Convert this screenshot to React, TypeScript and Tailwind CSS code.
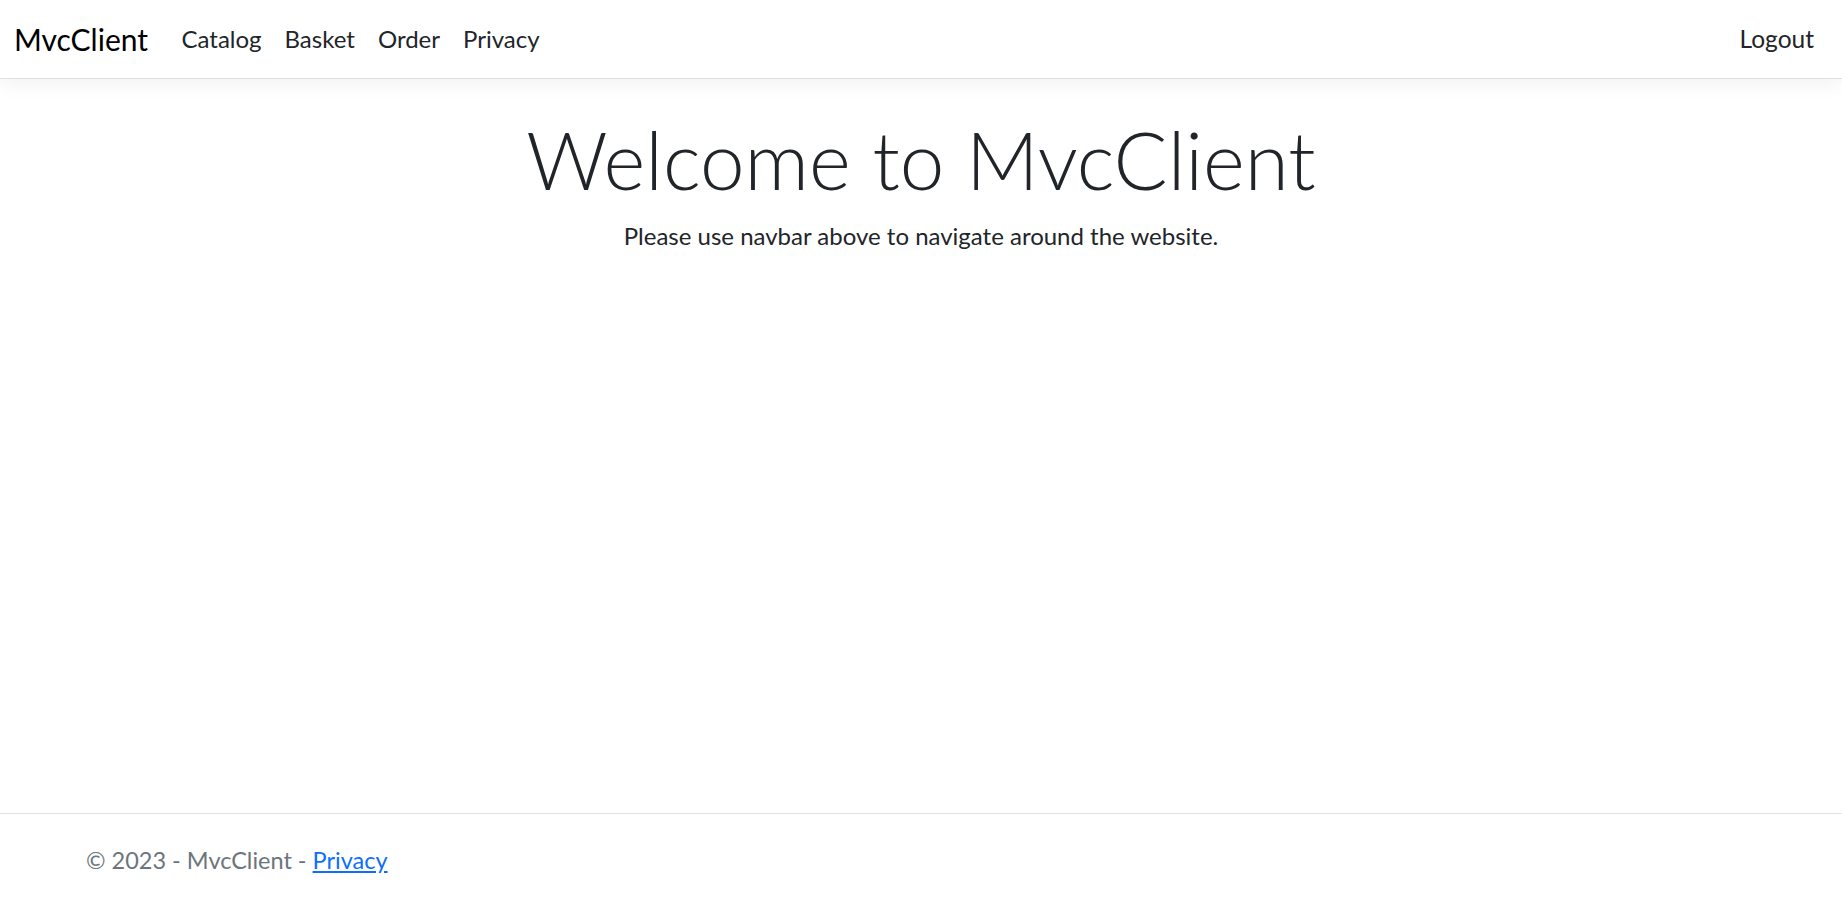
export default function App() {
  const links = ["Catalog", "Basket", "Order", "Privacy"];

  return (
    <div className="min-h-[898px] flex flex-col bg-white text-[#212529] font-['Lato','Open_Sans',sans-serif]">
      {/* NAVBAR */}
      <header>
        <nav className="h-[79px] flex items-center justify-between px-[14px] bg-white border-b border-[#dfdfdf] shadow-[0_6px_18px_rgba(0,0,0,0.05)]">
          <div className="flex items-center">
            <a className="text-[30px] leading-none mr-[22px] text-black">
              MvcClient
            </a>

            <ul className="flex items-center">
              {links.map((l) => (
                <li key={l}>
                  <a className="block px-[11.5px] text-[24px] leading-none">
                    {l}
                  </a>
                </li>
              ))}
            </ul>
          </div>

          <a className="text-[24.5px] leading-none pr-[14px]">Logout</a>
        </nav>
      </header>

      {/* MAIN */}
      <main className="flex-1">
        <div className="text-center pt-[32px]">
          <h1 className="text-[80px] font-light leading-[1.2]">
            Welcome to MvcClient
          </h1>

          <p className="text-[24px] leading-[1.5] mt-[11px]">
            Please use navbar above to navigate around the website.
          </p>
        </div>
      </main>

      {/* FOOTER */}
      <footer className="h-[85px] flex items-center border-t border-[#dee2e6] pl-[86px] pt-[9px] text-[23.5px] text-[#6c757d]">
        © 2023 - MvcClient -{" "}
        <a className="ml-[6px] text-[#0d6efd] underline">Privacy</a>
      </footer>
    </div>
  );
}
